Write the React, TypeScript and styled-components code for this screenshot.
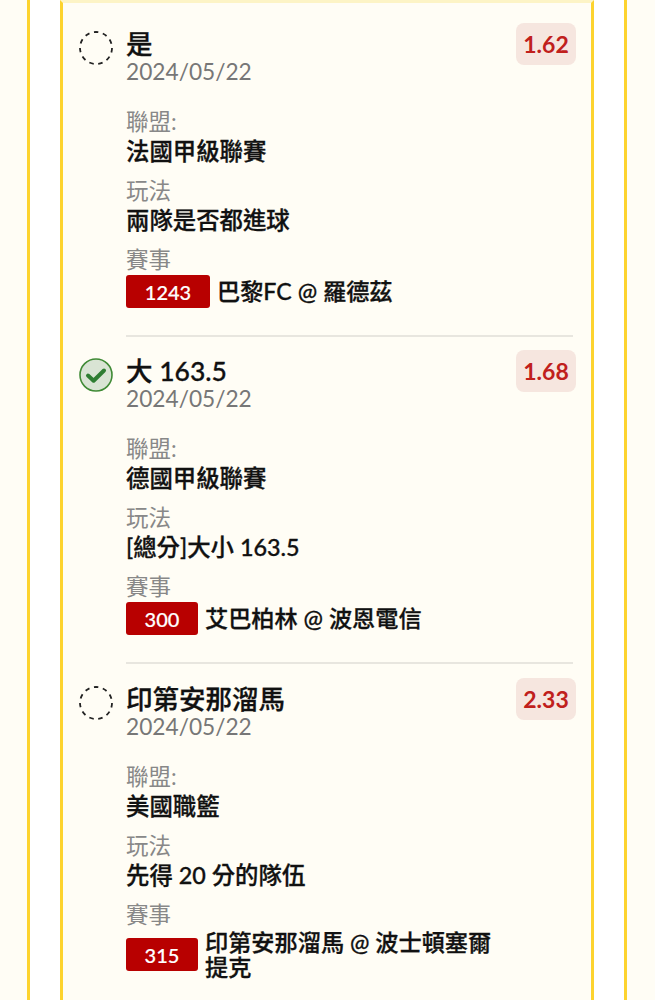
import styled, { createGlobalStyle } from "styled-components";

const GlobalStyle = createGlobalStyle`
  html, body {
    margin: 0;
    padding: 0;
    height: 1000px;
    overflow: hidden;
    background: #fffdf5;
    font-family: "Lato", "Noto Sans CJK TC", sans-serif;
  }
`;

const Page = styled.div`
  height: 1000px;
  overflow: hidden;
  padding: 0 28px 0 27px;
  background: #fffdf5;
`;

const OuterFrame = styled.div`
  height: 1000px;
  padding: 0 30px;
  background: #fff;
  border-left: 3px solid #fdd32e;
  border-right: 3px solid #fdd32e;
`;

const List = styled.div`
  height: 1000px;
  box-sizing: border-box;
  padding: 0 18px 0 16px;
  background: #fffdf5;
  border-left: 3px solid #fdd32e;
  border-right: 3px solid #fdd32e;
  border-top: 3px solid #fdf4c6;
`;

const Item = styled.div`
  display: flex;
  gap: 13px;
  padding-top: 19.4px;
  &:first-child {
    padding-top: 26px;
  }
`;

const Body = styled.div<{ $last?: boolean }>`
  flex: 1;
  min-width: 0;
  padding-bottom: 27px;
  border-bottom: ${({ $last }) => ($last ? "none" : "2px solid #e8e6df")};
`;

const Head = styled.div`
  display: flex;
  justify-content: space-between;
  align-items: flex-start;
  height: 30px;
`;

const Title = styled.div`
  font-size: 26.5px;
  line-height: 30px;
  font-weight: 500;
  -webkit-text-stroke: 0.3px #111;
  color: #111;
`;

const DateText = styled.div`
  font-size: 22.7px;
  line-height: 26px;
  margin-bottom: 22px;
  color: #777;
`;

const Odds = styled.div`
  width: 60px;
  height: 42px;
  margin: -6px -3px 0 0;
  border-radius: 8px;
  background: #f6e6df;
  color: #c0201c;
  font-size: 23px;
  font-weight: 700;
  line-height: 42px;
  text-align: center;
`;

const Section = styled.div`
  margin-top: 10px;
`;

const Label = styled.div`
  font-size: 22.5px;
  line-height: 29px;
  color: #888;
`;

const Value = styled.div`
  font-size: 23.4px;
  line-height: 30px;
  font-weight: 500;
  -webkit-text-stroke: 0.3px #111;
  color: #111;
`;

const Match = styled.div`
  display: flex;
  align-items: center;
  gap: 7px;
  max-width: 370px;
  margin-top: 1px;
`;

const MatchNo = styled.div<{ $wide?: boolean }>`
  flex: none;
  width: ${({ $wide }) => ($wide ? "84px" : "72px")};
  height: 33px;
  border-radius: 3px;
  background: #b80000;
  color: #fff;
  font-size: 20px;
  font-weight: 500;
  -webkit-text-stroke: 0.2px #fff;
  line-height: 35px;
  text-align: center;
`;

const MatchName = styled.div`
  font-size: 23.2px;
  line-height: 25px;
  font-weight: 500;
  -webkit-text-stroke: 0.3px #111;
  color: #111;
`;

const Mark = styled.svg`
  flex: none;
  width: 34px;
  height: 34px;
  margin-top: 2px;
`;

const EmptyMark = () => (
  <Mark viewBox="0 0 34 34">
    <circle cx="17" cy="17" r="16" fill="none" stroke="#222" strokeWidth="1.8" strokeDasharray="4.5 4.6" />
  </Mark>
);

const CheckMark = () => (
  <Mark viewBox="0 0 34 34">
    <circle cx="17" cy="17" r="16" fill="#d9e4d4" stroke="#3f8a35" strokeWidth="1.6" />
    <path d="M9 17.5l5.6 5.2L25 12.5" fill="none" stroke="#2e7d32" strokeWidth="4" strokeLinecap="round" strokeLinejoin="round" />
  </Mark>
);

const bets = [
  { title: "是", odds: "1.62", league: "法國甲級聯賽", leagueLabel: "聯盟:", play: "兩隊是否都進球", no: "1243", match: "巴黎FC @ 羅德茲", won: false },
  { title: "大 163.5", odds: "1.68", league: "德國甲級聯賽", leagueLabel: "聯盟:", play: "[總分]大小 163.5", no: "300", match: "艾巴柏林 @ 波恩電信", won: true },
  { title: "印第安那溜馬", odds: "2.33", league: "美國職籃", leagueLabel: "聯盟:", play: "先得 20 分的隊伍", no: "315", match: "印第安那溜馬 @ 波士頓塞爾提克", won: false },
];

export default function App() {
  return (
    <>
      <GlobalStyle />
      <Page>
        <OuterFrame>
          <List>
            {bets.map((bet, i) => (
              <Item key={bet.no}>
                {bet.won ? <CheckMark /> : <EmptyMark />}
                <Body $last={i === bets.length - 1}>
                  <Head>
                    <Title>{bet.title}</Title>
                    <Odds>{bet.odds}</Odds>
                  </Head>
                  <DateText>2024/05/22</DateText>
                  <Section>
                    <Label>{bet.leagueLabel}</Label>
                    <Value>{bet.league}</Value>
                  </Section>
                  <Section>
                    <Label>玩法</Label>
                    <Value>{bet.play}</Value>
                  </Section>
                  <Section>
                    <Label>賽事</Label>
                    <Match>
                      <MatchNo $wide={bet.no.length > 3}>{bet.no}</MatchNo>
                      <MatchName>{bet.match}</MatchName>
                    </Match>
                  </Section>
                </Body>
              </Item>
            ))}
          </List>
        </OuterFrame>
      </Page>
    </>
  );
}
